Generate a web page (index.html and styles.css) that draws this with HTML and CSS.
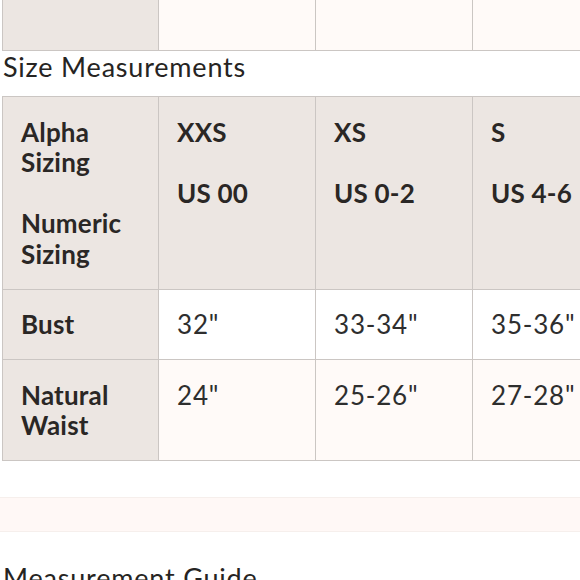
FILE: index.html
```html
<!DOCTYPE html>
<html lang="en">
<head>
<meta charset="utf-8">
<title>Size Measurements</title>
<link rel="stylesheet" href="styles.css">
</head>
<body>
<div class="page">
  <div class="grid grid-top">
    <div class="cell label top-cell"></div>
    <div class="cell data alt top-cell"></div>
    <div class="cell data alt top-cell"></div>
    <div class="cell data alt top-cell"></div>
    <div class="cell data alt top-cell"></div>
    <div class="cell data alt top-cell"></div>
  </div>

  <h2 class="section-title">Size Measurements</h2>

  <div class="grid grid-main">
    <div class="cell label head">Alpha<br>Sizing<br><br>Numeric<br>Sizing</div>
    <div class="cell label head">XXS<br><br>US 00</div>
    <div class="cell label head">XS<br><br>US 0-2</div>
    <div class="cell label head">S<br><br>US 4-6</div>
    <div class="cell label head">M<br><br>US 8-10</div>
    <div class="cell label head">L<br><br>US 12-14</div>

    <div class="cell label head">Bust</div>
    <div class="cell data">32"</div>
    <div class="cell data">33-34"</div>
    <div class="cell data">35-36"</div>
    <div class="cell data">37-38"</div>
    <div class="cell data">39-41"</div>

    <div class="cell label head">Natural<br>Waist</div>
    <div class="cell data alt">24"</div>
    <div class="cell data alt">25-26"</div>
    <div class="cell data alt">27-28"</div>
    <div class="cell data alt">29-30"</div>
    <div class="cell data alt">31-33"</div>
  </div>

  <div class="band"></div>

  <h2 class="section-title guide">Measurement Guide</h2>
</div>
</body>
</html>
```

FILE: styles.css
```css
html, body {
  margin: 0;
  padding: 0;
  background: #ffffff;
  overflow: hidden;
}

.page {
  width: 580px;
  height: 580px;
  overflow: hidden;
  padding-left: 2px;
  box-sizing: border-box;
  font-family: Lato, "Liberation Sans", sans-serif;
  color: #2c2927;
}

.grid {
  display: grid;
  grid-template-columns: 156px 157px 157px 157px 157px 157px;
  width: max-content;
  border-left: 1px solid #cbc6c3;
}

.grid-main {
  border-top: 1px solid #cbc6c3;
}

.cell {
  box-sizing: border-box;
  border-right: 1px solid #cbc6c3;
  border-bottom: 1px solid #cbc6c3;
  padding: 19.5px 8px 19.5px 18px;
  font-size: 26px;
  line-height: 30.5px;
  white-space: nowrap;
}

.top-cell {
  height: 51px;
  padding: 0;
}

.label {
  background: #ece6e2;
}

.head {
  font-weight: 700;
  letter-spacing: 0.2px;
  color: #2a2725;
}

.data {
  background: #ffffff;
  font-weight: 400;
  letter-spacing: 0.8px;
  color: #2e2e2e;
}

.data.alt {
  background: #fffaf8;
}

.section-title {
  margin: 0 0 14px 1px;
  font-size: 27px;
  font-weight: 400;
  line-height: 31px;
  color: #262422;
  letter-spacing: 0.8px;
}

.band {
  margin: 36px 0 0 -2px;
  height: 35px;
  box-sizing: border-box;
  background: #fff8f6;
  border-top: 1px solid #f6efec;
  border-bottom: 1px solid #f6efec;
}

.guide {
  margin-top: 30px;
}
```
